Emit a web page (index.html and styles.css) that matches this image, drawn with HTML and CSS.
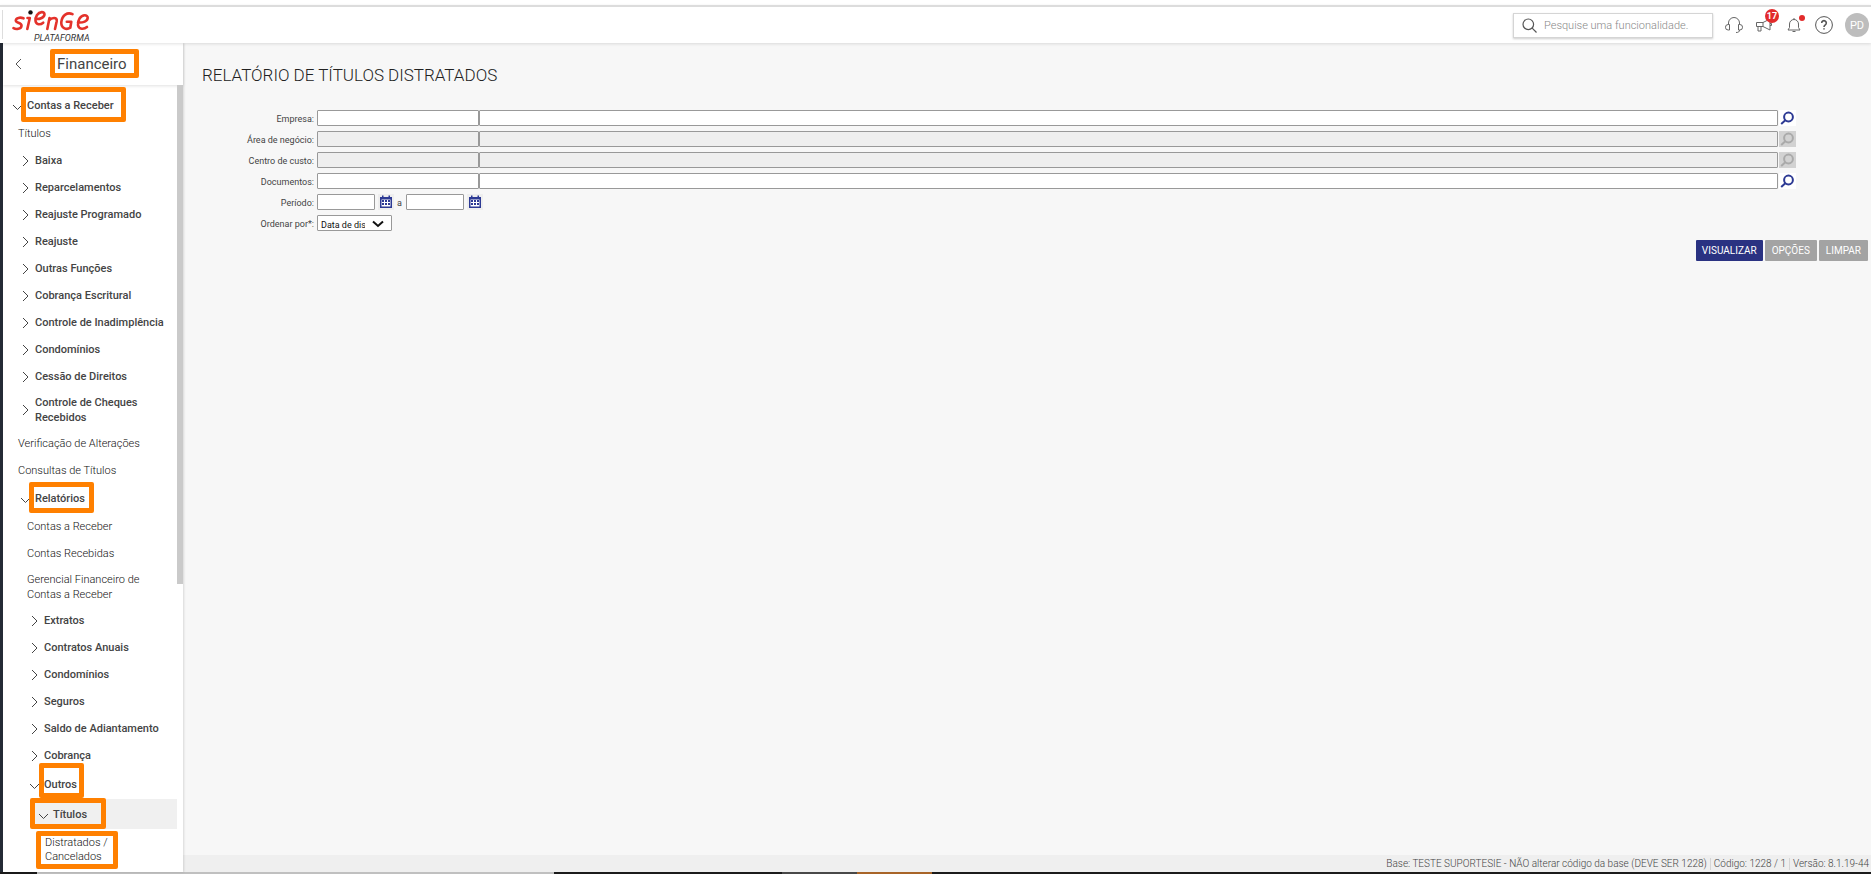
FILE: index.html
```html
<!DOCTYPE html>
<html lang="pt-BR">
<head>
<meta charset="utf-8">
<title>Relatório de Títulos Distratados</title>
<link rel="stylesheet" href="styles.css">
</head>
<body>
<svg class="defs" width="0" height="0" aria-hidden="true">
  <symbol id="right" viewBox="0 0 7 12"><path d="M1 1l5 5-5 5" /></symbol>
  <symbol id="down" viewBox="0 0 11 7"><path d="M1 1l4.500 4.500L10 1" /></symbol>
  <symbol id="lupa" viewBox="0 0 17 16"><circle cx="9.500" cy="7" r="4.400"/><path d="M6.300 10.200L2.200 14"/></symbol>
  <symbol id="cal" viewBox="0 0 16 16"><path fill="currentColor" d="M2 3h2V1.500h1.500V3h5V1.500H12V3h2v11H2z"/><path fill="#fff" d="M3.500 5.500h9v7h-9z"/><path fill="currentColor" d="M4 6h2v2H4zM7 6h2v2H7zM10 6h2v2h-2zM4 9h2v2H4zM7 9h2v2H7zM10 9h2v2h-2z"/></symbol>
</svg>
<header class="topbar">
  <div class="brand">
    <svg width="80" height="34" viewBox="0 0 80 34" role="img" aria-label="Sienge Plataforma">
      <g class="logo-line">
        <path d="M11.500 8.300C8 7 4 7.800 3.800 10.400c-.2 2.800 6 2 5.700 5.400-.3 3.400-5.500 3.700-8 2.400"/>
        <path d="M15.500 8h2.300L15.300 19"/>
        <path d="M23.500 9c4.500.3 9-1.500 9-4.700 0-3-5-3-7.500.7-2.500 4-2 8.700 1.500 9.200 1.800.2 3.500-.5 4.700-1.500"/>
        <path d="M37.500 8L35.300 19M37 10.500c2.500-3 8.500-3.800 7.700.7L43 19"/>
        <path d="M60.500 4.200c-5-2.400-10.500.8-11.200 8-.5 6 5 8 9 5.500l1-6h-4.500"/>
        <path d="M66 12.500c5 .4 9.700-1.300 9.700-4.700 0-3.300-5.200-3.500-8 .5-3 4.700-2.200 10 2 10.400 2 .2 4-.6 5.300-1.700"/>
      </g>
      <circle cx="18.500" cy="2.400" r="2.200"/>
    </svg>
    <span class="brand-sub">PLATAFORMA</span>
  </div>
  <div class="tools">
    <label class="search">
      <svg width="15" height="15" viewBox="0 0 15 15"><circle cx="6.300" cy="6.300" r="5.300"/><path d="M10.200 10.200l4.300 4.300"/></svg>
      <input type="search" placeholder="Pesquise uma funcionalidade." aria-label="Pesquise uma funcionalidade">
    </label>
    <button class="tool headset" aria-label="Suporte"><svg width="18" height="18" viewBox="0 0 18 18"><path d="M3.500 8.500V7a5.500 5.500 0 0 1 11 0v1.500M4.500 8.500v5.500H3.200a2.700 2.700 0 0 1 0-5.500zM13.500 8.500v5.500h1.300a2.700 2.700 0 0 0 0-5.500zM14.500 14c0 1.800-1 2.500-3.500 2.500"/></svg></button>
    <button class="tool mega" aria-label="Novidades"><svg width="18" height="18" viewBox="0 0 18 18"><path d="M1.500 6.500h6.500L15 3v11l-7-3.500H1.500zM3 10.500V15h3v-4.500M8 6.500v4M15 7.500h1.500v2H15"/></svg><b class="badge">17</b></button>
    <button class="tool bell" aria-label="Notificações"><svg width="18" height="18" viewBox="0 0 18 18"><path d="M3 14l1.500-2.500V8a4.500 4.500 0 0 1 9 0v3.500L15 14zM9 3.500V2M7.500 15.500h3"/></svg><i class="dot"></i></button>
    <button class="tool help" aria-label="Ajuda"><svg width="18" height="18" viewBox="0 0 18 18"><circle cx="9" cy="9" r="8.400"/><path class="q" d="M6.700 7a2.300 2.300 0 1 1 3.600 1.900c-.9.600-1.300 1-1.300 2M9 12.200v1.400"/></svg></button>
    <button class="avatar">PD</button>
  </div>
</header>
<div class="body">
  <nav class="side">
    <div class="side-head"><button class="back" aria-label="Voltar"><svg width="7" height="12" viewBox="0 0 7 12"><path d="M6 1L1 6l5 5"/></svg></button><h2>Financeiro</h2></div>
    <div class="menu">
      <div class="items">
        <a href="#" class="open g0"><svg><use href="#down"/></svg>Contas a Receber</a>
        <a href="#" class="leaf l1">Títulos</a>
        <a href="#" class="g1"><svg><use href="#right"/></svg>Baixa</a>
        <a href="#" class="g1"><svg><use href="#right"/></svg>Reparcelamentos</a>
        <a href="#" class="g1"><svg><use href="#right"/></svg>Reajuste Programado</a>
        <a href="#" class="g1"><svg><use href="#right"/></svg>Reajuste</a>
        <a href="#" class="g1"><svg><use href="#right"/></svg>Outras Funções</a>
        <a href="#" class="g1"><svg><use href="#right"/></svg>Cobrança Escritural</a>
        <a href="#" class="g1"><svg><use href="#right"/></svg>Controle de Inadimplência</a>
        <a href="#" class="g1"><svg><use href="#right"/></svg>Condomínios</a>
        <a href="#" class="g1"><svg><use href="#right"/></svg>Cessão de Direitos</a>
        <a href="#" class="g1"><svg><use href="#right"/></svg>Controle de Cheques<br>Recebidos</a>
        <a href="#" class="leaf l1">Verificação de Alterações</a>
        <a href="#" class="leaf l1">Consultas de Títulos</a>
        <a href="#" class="open g1"><svg><use href="#down"/></svg>Relatórios</a>
        <a href="#" class="leaf l2">Contas a Receber</a>
        <a href="#" class="leaf l2">Contas Recebidas</a>
        <a href="#" class="leaf l2">Gerencial Financeiro de<br>Contas a Receber</a>
        <a href="#" class="g2"><svg><use href="#right"/></svg>Extratos</a>
        <a href="#" class="g2"><svg><use href="#right"/></svg>Contratos Anuais</a>
        <a href="#" class="g2"><svg><use href="#right"/></svg>Condomínios</a>
        <a href="#" class="g2"><svg><use href="#right"/></svg>Seguros</a>
        <a href="#" class="g2"><svg><use href="#right"/></svg>Saldo de Adiantamento</a>
        <a href="#" class="g2"><svg><use href="#right"/></svg>Cobrança</a>
        <a href="#" class="open g2"><svg><use href="#down"/></svg>Outros</a>
        <a href="#" class="open g3 current"><svg><use href="#down"/></svg>Títulos</a>
        <a href="#" class="leaf l3">Distratados /<br>Cancelados</a>
      </div>
      <div class="scroll"><div class="thumb"></div></div>
    </div>
    <div class="mark m1"></div><div class="mark m2"></div><div class="mark m3"></div>
    <div class="mark m4"></div><div class="mark m5"></div><div class="mark m6"></div>
  </nav>
  <main>
    <h1>RELATÓRIO DE TÍTULOS DISTRATADOS</h1>
    <form>
      <div class="row"><label for="emp">Empresa:</label><input id="emp" class="code"><input class="desc" aria-label="Nome da empresa"><button type="button" class="look" aria-label="Buscar empresa"><svg><use href="#lupa"/></svg></button></div>
      <div class="row"><label for="area">Área de negócio:</label><input id="area" class="code" disabled><input class="desc" disabled aria-label="Nome da área"><button type="button" class="look" disabled aria-label="Buscar área"><svg><use href="#lupa"/></svg></button></div>
      <div class="row"><label for="cc">Centro de custo:</label><input id="cc" class="code" disabled><input class="desc" disabled aria-label="Nome do centro"><button type="button" class="look" disabled aria-label="Buscar centro"><svg><use href="#lupa"/></svg></button></div>
      <div class="row"><label for="doc">Documentos:</label><input id="doc" class="code"><input class="desc" aria-label="Nome do documento"><button type="button" class="look" aria-label="Buscar documento"><svg><use href="#lupa"/></svg></button></div>
      <div class="row"><label for="ini">Período:</label><input id="ini" class="date"><button type="button" class="cal" aria-label="Calendário inicial"><svg><use href="#cal"/></svg></button><label class="to" for="fim">a</label><input id="fim" class="date"><button type="button" class="cal" aria-label="Calendário final"><svg><use href="#cal"/></svg></button></div>
      <div class="row"><label for="ord">Ordenar por*:</label><span class="select"><select id="ord"><option>Data de distrato</option></select><svg width="12" height="8" viewBox="0 0 12 8"><path d="M1 1.500l5 4.500 5-4.500"/></svg></span></div>
      <div class="actions"><button type="button" class="primary">VISUALIZAR</button><button type="button">OPÇÕES</button><button type="reset">LIMPAR</button></div>
    </form>
    <footer><span>Base: TESTE SUPORTESIE - NÃO alterar código da base (DEVE SER 1228)</span><span>Código: 1228 / 1</span><span>Versão: 8.1.19-44</span></footer>
  </main>
</div>
<div class="taskbar"><i class="t1"></i><i class="t2"></i><i class="t3"></i><i class="t4"></i><i class="t5"></i></div>
</body>
</html>
```
FILE: styles.css
```css
* { box-sizing: border-box; }
body {
  margin: 0;
  height: 100vh;
  display: flex;
  flex-direction: column;
  overflow: hidden;
  font-family: Roboto, sans-serif;
  font-size: 12px;
  color: #444;
  background: #fff;
}
button, input, select { font: inherit; color: inherit; margin: 0; padding: 0; }
button { border: 0; background: none; }
svg { display: block; fill: none; flex: none; }
.defs { position: absolute; }

.topbar {
  flex: none;
  margin-top: 5px;
  border-top: 2px solid #dcdcdc;
  height: 38px;
  display: flex;
  justify-content: space-between;
  position: relative;
  z-index: 2;
  box-shadow: 0 1px 3px rgba(0, 0, 0, .12);
  background: #fff;
}
.brand { position: relative; margin: 3px 0 4px 2px; padding-left: 9px; border-left: 1px solid #ddd; }
.brand circle { fill: #111; }
.logo-line path { stroke: #e4322b; stroke-width: 2.600; stroke-linecap: round; stroke-linejoin: round; }
.brand-sub { position: absolute; left: 31px; top: 23px; font-size: 9px; line-height: 10px; font-style: italic; color: #333; }
.tools { display: flex; align-items: center; padding-right: 2px; }
.search {
  display: flex;
  align-items: center;
  gap: 7px;
  width: 200px;
  height: 25px;
  padding-left: 8px;
  margin-right: 12px;
  border: 1px solid #d5d5d5;
  box-shadow: 0 1px 2px rgba(0, 0, 0, .2);
}
.search svg { stroke: #555; stroke-width: 1.200; }
.search input { flex: 1; min-width: 0; border: 0; outline: 0; background: none; font-size: 11px; appearance: none; }
.search input::placeholder { color: #888; opacity: 1; font-weight: 300; }
.tool { position: relative; width: 18px; height: 18px; margin-right: 12px; }
.tool svg { stroke: #666; stroke-width: 1; }
.help svg { stroke: #555; }
.help .q { stroke-width: 1.600; }
.badge { position: absolute; left: 10px; top: -7px; width: 14px; height: 14px; border-radius: 50%; background: #e22b2b; color: #fff; font-size: 9px; line-height: 14px; }
.dot { position: absolute; left: 14px; top: -1px; width: 6px; height: 6px; border-radius: 50%; background: #e22b2b; }
.avatar { width: 24px; height: 24px; border-radius: 50%; background: #bdbdbd; color: #fff; font-size: 11px; }

.body { flex: 1; min-height: 0; display: flex; }
.side { position: relative; z-index: 1; flex: none; width: 183px; border-left: 3px solid #242a35; background: #fff; display: flex; flex-direction: column; box-shadow: 1px 0 2px rgba(0, 0, 0, .12); }
.side-head { flex: none; height: 42px; display: flex; align-items: center; gap: 35px; padding-left: 12px; box-shadow: 0 1px 3px rgba(0, 0, 0, .12); }
.back svg { stroke: #555; }
h2 { margin: 0; font-size: 15px; font-weight: 400; }
.menu { flex: 1; min-height: 0; display: flex; }
.items { flex: 1; padding-top: 6px; overflow: hidden; }
.items a { display: flex; align-items: center; min-height: 27px; padding-top: 5px; padding-bottom: 5px; color: #444; text-decoration: none; font-size: 11px; line-height: 15px; font-weight: 500; }
.items svg { width: 7px; height: 12px; margin-right: 6px; stroke: #444; }
.items .open { min-height: 29px; }
.items .open svg { width: 11px; height: 7px; margin-right: 4px; margin-top: 4px; }
.items .g2.open { min-height: 30px; }
.items .current { min-height: 30px; margin-left: 30px; background: #f0f0f0; }
.items .g0 { padding-left: 9px; }
.items .g1 { padding-left: 19px; }
.items .g1.open { padding-left: 17px; }
.items .g2 { padding-left: 28px; }
.items .g2.open { padding-left: 26px; }
.items .g3 { padding-left: 5px; }
.items .leaf { font-weight: 300; color: #111; }
.items .l1 { padding-left: 15px; }
.items .l2 { padding-left: 24px; }
.items .l3 { padding-top: 7px; padding-left: 42px; line-height: 14px; }
.scroll { width: 6px; }
.thumb { height: 63.400%; background: #cacaca; }
.mark { position: absolute; border: 5px solid #ff8000; border-radius: 2px; }
.m1 { left: 47px; top: 6px; width: 89px; height: 29px; }
.m2 { left: 18px; top: 44px; width: 105px; height: 35px; }
.m3 { left: 26px; top: 439px; width: 65px; height: 31px; }
.m4 { left: 36px; top: 720px; width: 45px; height: 35px; }
.m5 { left: 27px; top: 755px; width: 76px; height: 31px; }
.m6 { left: 33px; top: 788px; width: 82px; height: 38px; }

main { flex: 1; min-width: 0; display: flex; flex-direction: column; background: #f7f7f7; }
h1 { margin: 20px 0 0 19px; font-size: 17px; line-height: 24px; font-weight: 300; color: #222; }
form { margin-top: 23px; padding-right: 3px; font-size: 9px; }
.row { display: flex; height: 16px; margin-bottom: 5px; padding-right: 72px; line-height: 18px; }
.row > label { width: 131px; margin-right: 3px; text-align: right; }
.row input, .row select { height: 16px; border: 1px solid #999; border-radius: 1px; background: #fff; }
.row input:disabled { background: #efefef; }
.row .code { width: 162px; }
.row .desc { flex: 1; min-width: 0; }
.look { width: 17px; height: 16px; margin-left: 1px; background: #fff; color: #2d3a94; }
.look svg { width: 17px; height: 16px; stroke: currentColor; stroke-width: 2; }
.look:disabled { background: #d2d2d2; color: #aaa; }
.row .date { width: 58px; }
.cal { width: 16px; height: 16px; margin-left: 3px; background: #eee; color: #2d3a94; }
.cal svg { width: 16px; height: 16px; }
.row .to { width: auto; margin: 0 4px 0 3px; }
.select { position: relative; }
.select select { appearance: none; width: 75px; padding: 0 26px 0 3px; color: #111; display: block; overflow: hidden; }
.select svg { position: absolute; right: 8px; top: 5px; stroke: #111; stroke-width: 2; }
.actions { display: flex; justify-content: flex-end; gap: 2px; margin-top: 9px; }
.actions button { height: 21px; padding: 0 7px; border-radius: 1px; background: #a3a3a3; color: #fff; font-size: 10px; }
.actions .primary { padding: 0 6px; background: #2a3282; }
footer { margin-top: auto; height: 17px; background: #efefef; display: flex; justify-content: flex-end; align-items: center; padding-right: 2px; font-size: 10px; font-weight: 300; line-height: 12px; color: #444; }
footer span + span { margin-left: 3px; padding-left: 3px; border-left: 1px solid #d5d5d5; }
.taskbar { flex: none; height: 2px; display: flex; background: #1b1b1b; }
.t1 { width: 2%; }
.t2 { width: 27.600%; background: #c0c0c0; }
.t3 { width: 12.200%; }
.t4 { width: 4%; background: #484848; }
.t5 { width: 4%; background: #a86428; }
```
